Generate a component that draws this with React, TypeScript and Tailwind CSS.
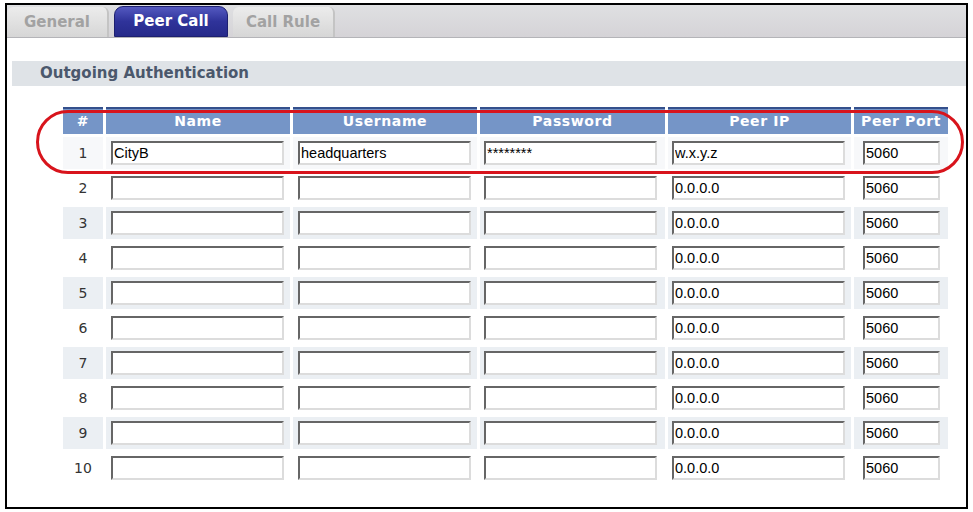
import React from 'react';

const cols = [
  { label: '#', w: 'w-[40px]' },
  { label: 'Name', w: 'w-[184px]' },
  { label: 'Username', w: 'w-[184px]' },
  { label: 'Password', w: 'w-[185px]' },
  { label: 'Peer IP', w: 'w-[183px]' },
  { label: 'Peer Port', w: 'w-[94px]' },
];

type Row = { name: string; user: string; pass: string; ip: string; port: string };

const rows: Row[] = Array.from({ length: 10 }, (_, i) =>
  i === 0
    ? { name: 'CityB', user: 'headquarters', pass: '********', ip: 'w.x.y.z', port: '5060' }
    : { name: '', user: '', pass: '', ip: '0.0.0.0', port: '5060' }
);

function Field({ value, wide = true }: { value: string; wide?: boolean }) {
  return (
    <input
      readOnly
      value={value}
      className={`${wide ? 'w-[173px]' : 'w-[77px]'} h-[24px] bg-white border-2 border-t-[#666] border-l-[#666] border-r-[#dcdcdc] border-b-[#dcdcdc] pl-[1px] text-[14.5px] text-black outline-none font-['Liberation_Sans',Arial,sans-serif]`}
    />
  );
}

function Tab({ label, active }: { label: string; active?: boolean }) {
  return active ? (
    <div className="h-[31px] w-[114px] mt-[1px] rounded-t-[9px] bg-gradient-to-b from-[#5458c0] via-[#2f339a] to-[#262a8a] border border-[#1d2070] flex items-center justify-center text-white font-bold text-[15px]">
      {label}
    </div>
  ) : (
    <div className="h-[30px] w-[102px] mt-[3px] rounded-t-[6px] bg-gradient-to-b from-[#ececec] to-[#d6d6d6] border-r-2 border-[#c4c4c4] flex items-center justify-center text-[#a2a2a2] font-bold text-[15px]">
      {label}
    </div>
  );
}

export default function App() {
  return (
    <div className="w-[973px] h-[512px] bg-white pl-[5px] pt-[3px] font-['DejaVu_Sans',Verdana,sans-serif]">
      <div className="relative w-[963px] h-[506px] border-2 border-black bg-white">
        {/* Tabs */}
        <div className="h-[33px] flex items-end gap-[5px] bg-gradient-to-b from-[#dfe0e2] to-[#d5d3d7] border-b border-[#b4b4b8]">
          <Tab label="General" />
          <Tab label="Peer Call" active />
          <Tab label="Call Rule" />
        </div>

        {/* Section title */}
        <div className="mt-[23px] ml-[5px] h-[25px] bg-[#dfe3e7] flex items-center pl-[28px] text-[15px] font-bold text-[#4b586c]">
          Outgoing Authentication
        </div>

        {/* Table */}
        <div className="mt-[21px] ml-[56px] flex flex-col gap-[3px]">
          <div className="flex gap-[3px]">
            {cols.map((c) => (
              <div
                key={c.label}
                className={`${c.w} h-[27px] bg-[#7595c7] border-t-2 border-[#34508c] flex items-center justify-center text-white font-bold text-[14px] tracking-[0.6px] whitespace-nowrap`}
              >
                {c.label}
              </div>
            ))}
          </div>
          {rows.map((r, i) => {
            const bg = i % 2 === 0 && i > 0 ? 'bg-[#ebeff3]' : i === 0 ? 'bg-[#f7f8fa]' : 'bg-white';
            return (
              <div key={i} className="flex gap-[3px]">
                <div className={`w-[40px] h-[32px] ${bg} flex items-center justify-center text-[14px] text-[#333]`}>
                  {i + 1}
                </div>
                <div className={`w-[184px] h-[32px] ${bg} flex items-center pl-[5px]`}>
                  <Field value={r.name} />
                </div>
                <div className={`w-[184px] h-[32px] ${bg} flex items-center pl-[5px]`}>
                  <Field value={r.user} />
                </div>
                <div className={`w-[185px] h-[32px] ${bg} flex items-center pl-[4px]`}>
                  <Field value={r.pass} />
                </div>
                <div className={`w-[183px] h-[32px] ${bg} flex items-center pl-[4px]`}>
                  <Field value={r.ip} />
                </div>
                <div className={`w-[94px] h-[32px] ${bg} flex items-center pl-[9px]`}>
                  <Field value={r.port} wide={false} />
                </div>
              </div>
            );
          })}
        </div>

        {/* Red highlight annotation */}
        <div className="absolute left-[29px] top-[105px] w-[928px] h-[64px] rounded-[32px] border-[3px] border-[#d8141c] pointer-events-none" />
      </div>
    </div>
  );
}
